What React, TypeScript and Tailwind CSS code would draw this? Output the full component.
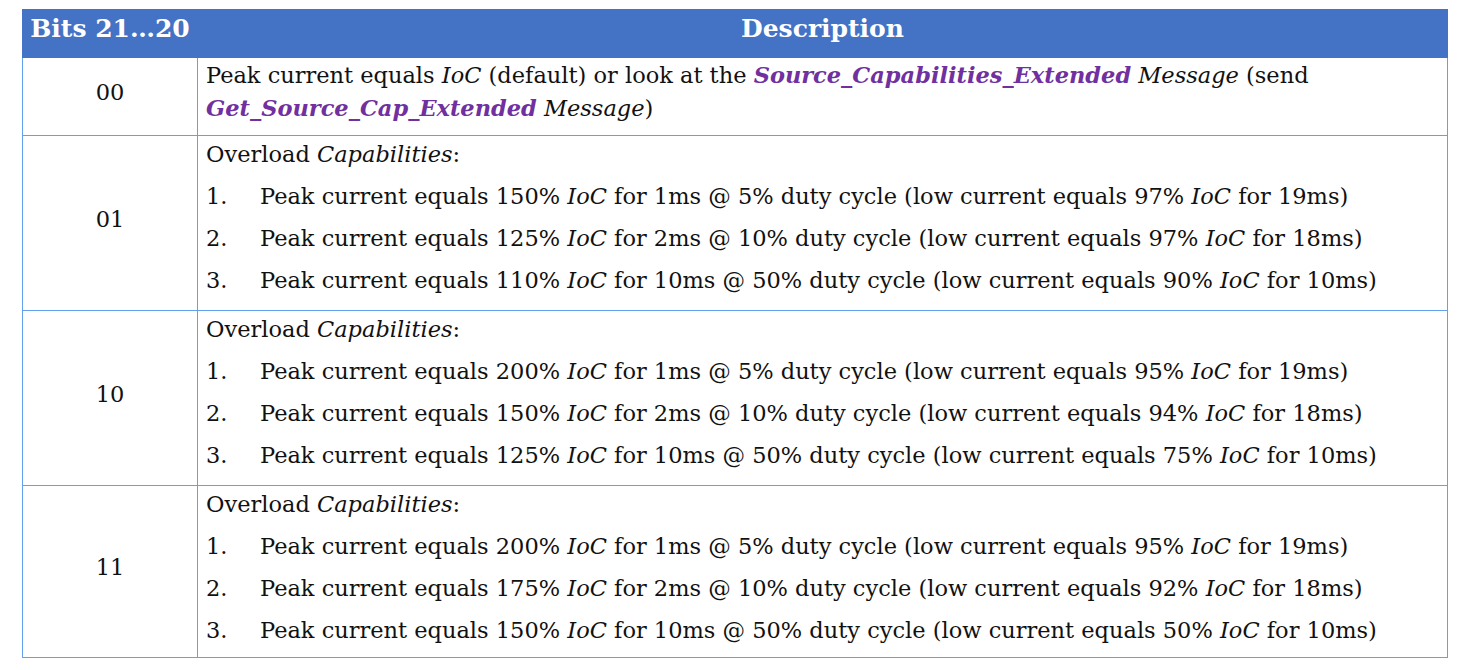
const purple = 'font-bold italic text-[#7030a0]';

type Row = { bits: string; h: string; items?: string[][] };

const Ioc = () => <i>IoC</i>;

const Item = ({ n, parts }: { n: number; parts: string[] }) => (
  <div className="flex mt-[9px]">
    <span className="w-[54px] shrink-0">{n}.</span>
    <span className="whitespace-nowrap">
      Peak current equals {parts[0]} <Ioc /> for {parts[1]} @ {parts[2]} duty cycle (low current equals {parts[3]} <Ioc /> for {parts[4]})
    </span>
  </div>
);

const rows: Row[] = [
  {
    bits: '01',
    h: 'h-[175px]',
    items: [
      ['150%', '1ms', '5%', '97%', '19ms'],
      ['125%', '2ms', '10%', '97%', '18ms'],
      ['110%', '10ms', '50%', '90%', '10ms'],
    ],
  },
  {
    bits: '10',
    h: 'h-[175px]',
    items: [
      ['200%', '1ms', '5%', '95%', '19ms'],
      ['150%', '2ms', '10%', '94%', '18ms'],
      ['125%', '10ms', '50%', '75%', '10ms'],
    ],
  },
  {
    bits: '11',
    h: 'h-[172px]',
    items: [
      ['200%', '1ms', '5%', '95%', '19ms'],
      ['175%', '2ms', '10%', '92%', '18ms'],
      ['150%', '10ms', '50%', '50%', '10ms'],
    ],
  },
];

export default function App() {
  return (
    <div className="bg-white w-[1468px] h-[670px] pt-[9px] pl-[22px] font-['DejaVu_Serif',serif] text-[22.5px] leading-[33px] text-[#111]">
      <table className="border-collapse w-[1426px] table-fixed">
        <colgroup>
          <col className="w-[175px]" />
          <col />
        </colgroup>
        <thead>
          <tr className="h-[48px] bg-[#4472c4] text-white font-bold text-[25px]">
            <th className="border border-[#4472c4] text-center align-top pt-[4px] leading-[30px]">Bits 21…20</th>
            <th className="border border-[#4472c4] text-center align-top pt-[4px] leading-[30px]">Description</th>
          </tr>
        </thead>
        <tbody>
          <tr className="h-[78px]">
            <td className="border border-[#62a2ea] text-center align-middle pb-[8px]">00</td>
            <td className="border border-[#62a2ea] align-top pl-[8px] pt-[1px] whitespace-nowrap">
              Peak current equals <Ioc /> (default) or look at the{' '}
              <span className={purple}>Source_Capabilities_Extended</span> <i>Message</i> (send
              <br />
              <span className={purple}>Get_Source_Cap_Extended</span> <i>Message</i>)
            </td>
          </tr>
          {rows.map((r) => (
            <tr key={r.bits} className={r.h}>
              <td className="border border-[#62a2ea] text-center align-middle pb-[8px]">{r.bits}</td>
              <td className="border border-[#62a2ea] align-top pl-[8px] pt-[2px]">
                <div>
                  Overload <i>Capabilities</i>:
                </div>
                {r.items!.map((p, i) => (
                  <Item key={i} n={i + 1} parts={p} />
                ))}
              </td>
            </tr>
          ))}
        </tbody>
      </table>
    </div>
  );
}
